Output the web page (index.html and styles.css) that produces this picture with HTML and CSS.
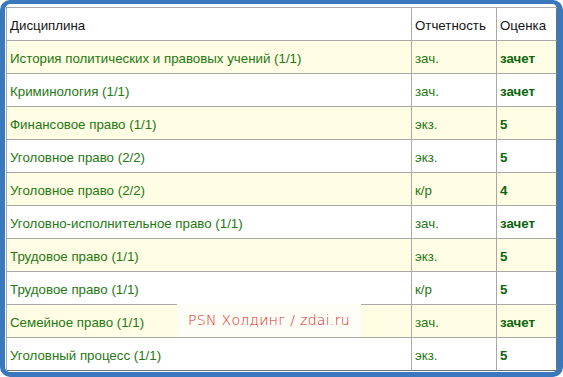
FILE: index.html
```html
<!DOCTYPE html>
<html lang="ru">
<head>
<meta charset="utf-8">
<title>Оценки</title>
<link rel="stylesheet" href="styles.css">
</head>
<body>
<div class="frame">
  <table class="grades">
    <colgroup>
      <col class="c-name">
      <col class="c-type">
      <col class="c-mark">
    </colgroup>
    <thead>
      <tr class="head">
        <td>Дисциплина</td>
        <td>Отчетность</td>
        <td>Оценка</td>
      </tr>
    </thead>
    <tbody>
      <tr class="odd"><td>История политических и правовых учений (1/1)</td><td>зач.</td><td class="mark">зачет</td></tr>
      <tr><td>Криминология (1/1)</td><td>зач.</td><td class="mark">зачет</td></tr>
      <tr class="odd"><td>Финансовое право (1/1)</td><td>экз.</td><td class="mark">5</td></tr>
      <tr><td>Уголовное право (2/2)</td><td>экз.</td><td class="mark">5</td></tr>
      <tr class="odd"><td>Уголовное право (2/2)</td><td>к/р</td><td class="mark">4</td></tr>
      <tr><td>Уголовно-исполнительное право (1/1)</td><td>зач.</td><td class="mark">зачет</td></tr>
      <tr class="odd"><td>Трудовое право (1/1)</td><td>экз.</td><td class="mark">5</td></tr>
      <tr><td>Трудовое право (1/1)</td><td>к/р</td><td class="mark">5</td></tr>
      <tr class="odd"><td>Семейное право (1/1)</td><td>зач.</td><td class="mark">зачет</td></tr>
      <tr class="last"><td>Уголовный процесс (1/1)</td><td>экз.</td><td class="mark">5</td></tr>
    </tbody>
  </table>
  <div class="watermark">PSN Холдинг / zdai.ru</div>
</div>
</body>
</html>
```

FILE: styles.css
```css
html, body {
  margin: 0;
  padding: 0;
  background: #ffffff;
}

.frame {
  position: relative;
  box-sizing: border-box;
  width: 563px;
  height: 377px;
  border-style: solid;
  border-color: #3a78be;
  border-width: 4px 6px 5px 5px;
  border-radius: 10px;
  padding: 3px 0 1px 1px;
  background: #ffffff;
  overflow: hidden;
}

.grades {
  border-collapse: separate;
  border-spacing: 0;
  table-layout: fixed;
  width: 551px;
  border-top: 1px solid #a8a8a8;
  border-left: 1px solid #a8a8a8;
  font-family: "Liberation Sans", Arial, sans-serif;
  font-size: 13.3px;
  color: #247812;
}

.c-name { width: 405px; }
.c-type { width: 85px; }
.c-mark { width: 60px; }

.grades td {
  box-sizing: border-box;
  height: 33px;
  padding: 2px 2px 0 3px;
  vertical-align: middle;
  white-space: nowrap;
  border-right: 1px solid #a8a8a8;
  border-bottom: 1px solid #a8a8a8;
}

.grades td:last-child {
  border-right-color: #707070;
}

.grades tr.last td {
  border-bottom-color: #707070;
}

.grades .head td {
  color: #141414;
  background: #ffffff;
}

.grades tr.odd td {
  background: #fffde4;
}

.grades td.mark {
  font-weight: bold;
  color: #0c640c;
}

.watermark {
  position: absolute;
  left: 172px;
  top: 300px;
  width: 184px;
  height: 33px;
  box-sizing: border-box;
  padding-top: 8px;
  background: #fefef6;
  color: #e2261e;
  font-family: "DejaVu Sans", sans-serif;
  font-size: 14px;
  font-weight: 300;
  text-align: center;
  letter-spacing: 0.3px;
}
```
